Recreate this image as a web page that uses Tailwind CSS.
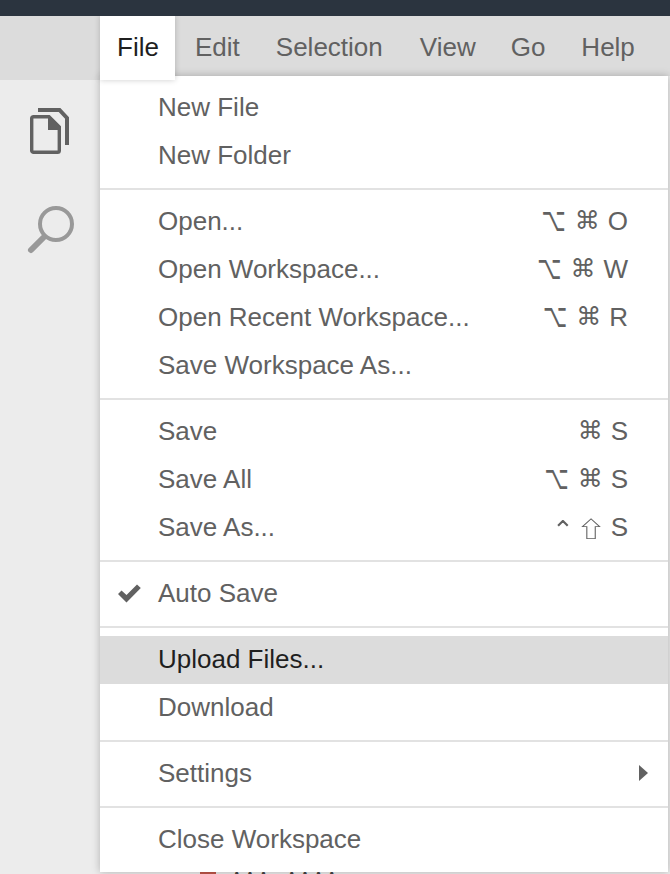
<!DOCTYPE html>
<html lang="en">

<head>
    <meta charset="UTF-8">
    <meta name="viewport" content="width=device-width, initial-scale=1.0">
    <script src="https://cdn.jsdelivr.net/npm/@tailwindcss/browser@4"></script>
    <title>File menu</title>
</head>

<body class="h-[874px] overflow-hidden bg-[#ececec] font-['Liberation_Sans',Arial,sans-serif] text-[26px] text-[#616161]">

    <!-- top strip -->
    <div class="relative z-30 h-4 bg-[#2b343f]"></div>

    <!-- menu bar -->
    <div class="flex h-[60px] bg-[#dcdcdc]">
        <div class="z-10 h-16 w-[100px] shrink-0 bg-[#dcdcdc]"></div>
        <div class="z-20 flex h-16 w-[75px] items-center justify-center bg-white pb-[2px] pl-[1px] text-[#1f1f1f] shadow-[0_0_6px_rgba(0,0,0,0.2)]">File</div>
        <div class="flex h-[62px] items-center">
            <span class="ml-[20px]">Edit</span>
            <span class="ml-[36px]">Selection</span>
            <span class="ml-[37px]">View</span>
            <span class="ml-[35px]">Go</span>
            <span class="ml-[36px]">Help</span>
        </div>
    </div>

    <div class="relative h-[798px]">
        <!-- left bar with the icons -->
        <div class="flex w-[100px] flex-col pt-[31px]">
            <svg class="ml-[30px]" width="40" height="48" viewBox="0 0 40 48" fill="none">
                <path d="M8 3 H29.5 L37 11 V38" stroke="#616161" stroke-width="4" />
                <path d="M3.7 9.7 H19 L29.3 20 V43.5 Q29.3 45.3 27.5 45.3 H3.7 Q1.7 45.3 1.7 43.5 V11.5 Q1.7 9.7 3.7 9.7 Z" stroke="#616161" stroke-width="3.4" />
                <path d="M18 8 L31 21 V23 H18 Z" fill="#616161" />
            </svg>
            <svg class="mt-[51px] ml-[26px]" width="50" height="50" viewBox="0 0 50 50" fill="none">
                <circle cx="30" cy="18" r="16" stroke="#999999" stroke-width="4" />
                <path d="M17 32 L5 44" stroke="#999999" stroke-width="6" stroke-linecap="round" />
            </svg>
        </div>

        <!-- what lies under the menu, cut off at the bottom -->
        <div class="absolute top-[792px] left-[100px] h-4 w-[570px] bg-[#ececec]">
            <div class="absolute top-0 left-[100px] h-4 w-4 bg-[#c0564a]"></div>
            <div class="absolute top-[-1px] left-[130px] flex gap-[15px] text-[20px] leading-6 text-[#444444]"><span>AAA</span><span>AAAA</span></div>
        </div>

        <!-- file menu -->
        <div class="absolute top-0 left-[100px] z-10 w-[568px] bg-white pt-[7px] pb-[9px] shadow-[0_0_8px_rgba(0,0,0,0.25)]">
            <div class="flex h-12 items-center pl-[58px] pr-10">New File</div>
            <div class="flex h-12 items-center pl-[58px] pr-10">New Folder</div>
            <div class="mt-[9px] mb-[7px] h-[2px] bg-[#e2e2e2]"></div>
            <div class="flex h-12 items-center justify-between pl-[58px] pr-10"><span>Open...</span>
                <span class="flex items-center font-['DejaVu_Sans',sans-serif]"><span class="scale-y-[1.6] text-[21px]">⌥</span><span class="ml-[9px] text-[25px]">⌘</span><span class="ml-[8px] font-['Liberation_Sans',sans-serif]">O</span></span></div>
            <div class="flex h-12 items-center justify-between pl-[58px] pr-10"><span>Open Workspace...</span>
                <span class="flex items-center font-['DejaVu_Sans',sans-serif]"><span class="scale-y-[1.6] text-[21px]">⌥</span><span class="ml-[9px] text-[25px]">⌘</span><span class="ml-[8px] font-['Liberation_Sans',sans-serif]">W</span></span></div>
            <div class="flex h-12 items-center justify-between pl-[58px] pr-10"><span>Open Recent Workspace...</span>
                <span class="flex items-center font-['DejaVu_Sans',sans-serif]"><span class="scale-y-[1.6] text-[21px]">⌥</span><span class="ml-[9px] text-[25px]">⌘</span><span class="ml-[8px] font-['Liberation_Sans',sans-serif]">R</span></span></div>
            <div class="flex h-12 items-center pl-[58px] pr-10">Save Workspace As...</div>
            <div class="mt-[9px] mb-[7px] h-[2px] bg-[#e2e2e2]"></div>
            <div class="flex h-12 items-center justify-between pl-[58px] pr-10"><span>Save</span>
                <span class="flex items-center font-['DejaVu_Sans',sans-serif]"><span class="text-[25px]">⌘</span><span class="ml-[8px] font-['Liberation_Sans',sans-serif]">S</span></span></div>
            <div class="flex h-12 items-center justify-between pl-[58px] pr-10"><span>Save All</span>
                <span class="flex items-center font-['DejaVu_Sans',sans-serif]"><span class="scale-y-[1.6] text-[21px]">⌥</span><span class="ml-[9px] text-[25px]">⌘</span><span class="ml-[8px] font-['Liberation_Sans',sans-serif]">S</span></span></div>
            <div class="flex h-12 items-center justify-between pl-[58px] pr-10"><span>Save As...</span>
                <span class="flex items-center font-['Noto_Sans_CJK_JP',sans-serif]"><span class="[will-change:transform]">⌃</span><span class="ml-[6px] scale-x-[1.3] text-[22px] [will-change:transform]">⇧</span><span class="ml-[9px] font-['Liberation_Sans',sans-serif]">S</span></span></div>
            <div class="mt-[9px] mb-[7px] h-[2px] bg-[#e2e2e2]"></div>
            <div class="relative flex h-12 items-center pl-[58px] pr-10">
                <svg class="absolute left-[18px] top-[15px]" width="23" height="19" viewBox="0 0 23 19" fill="#616161">
                    <path d="M0 10 L3.5 6.5 L8.5 11 L19 0.5 L22.8 4 L8.5 18.5 Z" />
                </svg>
                Auto Save
            </div>
            <div class="mt-[9px] mb-2 h-[2px] bg-[#e2e2e2]"></div>
            <div class="flex h-12 items-center bg-[#dcdcdc] pb-[2px] pl-[58px] pr-10 text-[#1f1f1f]">Upload Files...</div>
            <div class="flex h-12 items-center pb-[2px] pl-[58px] pr-10">Download</div>
            <div class="mt-2 mb-[7px] h-[2px] bg-[#e2e2e2]"></div>
            <div class="flex h-12 items-center justify-between pl-[58px] pr-5">
                <span>Settings</span>
                <svg width="9" height="16" viewBox="0 0 9 16" fill="#616161"><path d="M0 0 L9 8 L0 16 Z" /></svg>
            </div>
            <div class="mt-[9px] mb-[7px] h-[2px] bg-[#e2e2e2]"></div>
            <div class="flex h-12 items-center pl-[58px] pr-10">Close Workspace</div>
        </div>
    </div>

</body>

</html>
